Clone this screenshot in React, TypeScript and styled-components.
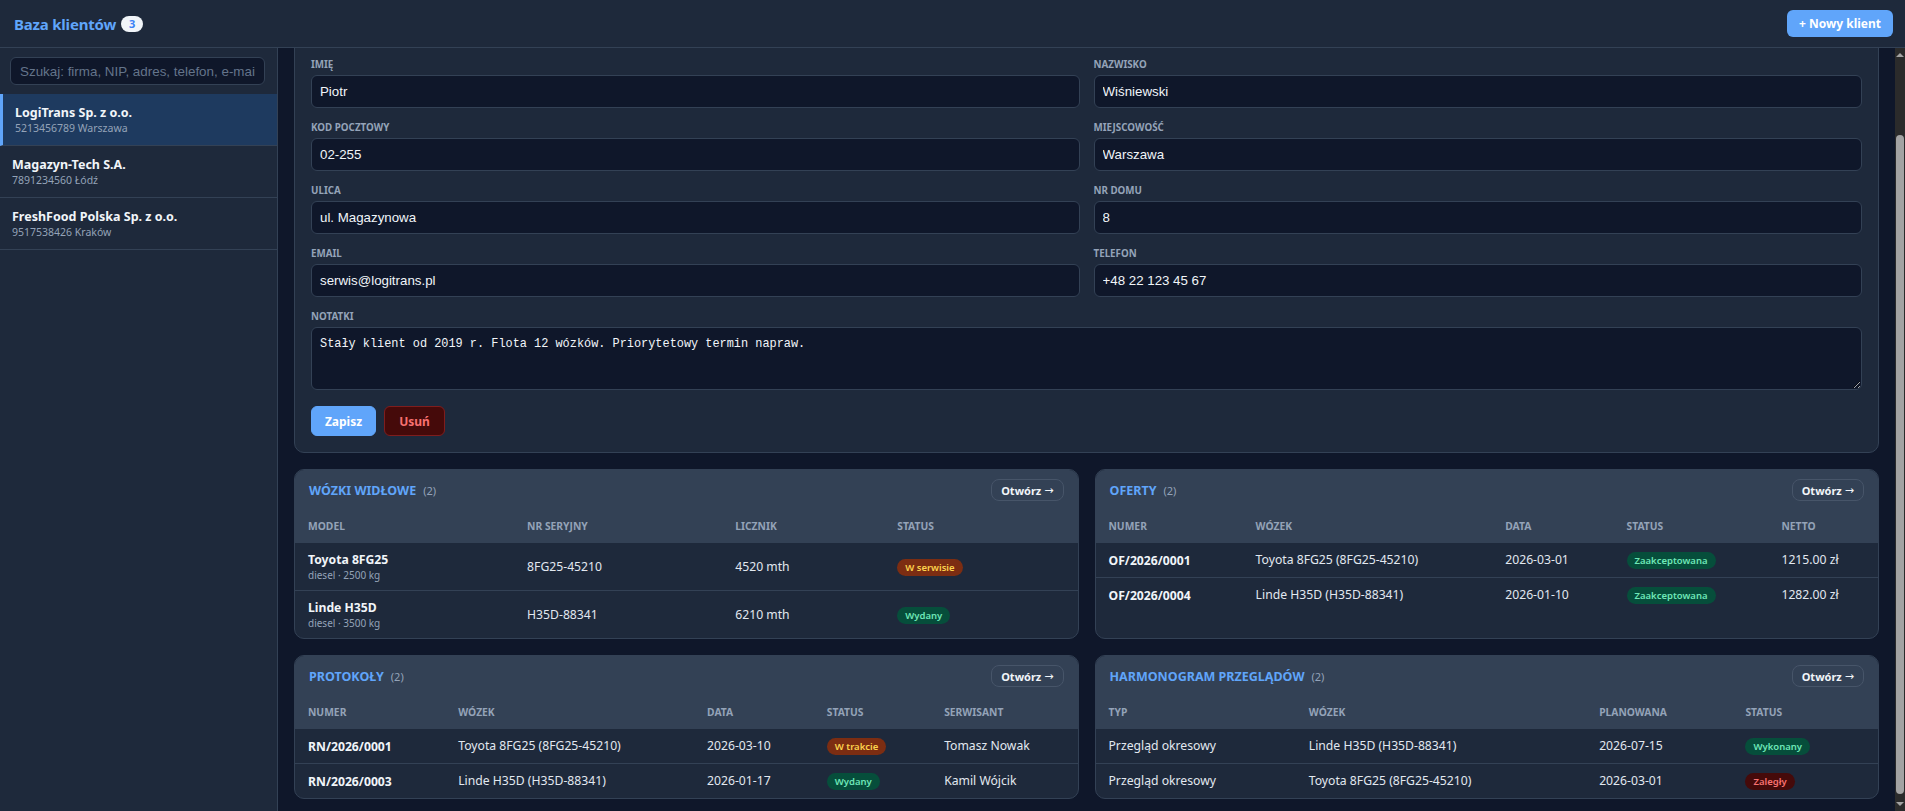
import { useLayoutEffect, useRef, useState } from "react";
import styled, { createGlobalStyle, css } from "styled-components";

const UI_FONT = `"Noto Sans", "Open Sans", sans-serif`;

const GlobalStyle = createGlobalStyle`
  html, body, #root {
    height: 100%;
  }
  body {
    margin: 0;
    background: #0f172a;
    color: #e2e8f0;
    font-family: ${UI_FONT};
    overflow: hidden;
  }
  * {
    box-sizing: border-box;
  }
`;

type Tone = "warn" | "ok" | "bad";

type Column = { label: string; width: number };

type Cell =
  | { kind: "text"; value: string }
  | { kind: "strong"; value: string }
  | { kind: "double"; value: string; sub: string }
  | { kind: "pill"; value: string; tone: Tone };

type PanelData = {
  title: string;
  count: number;
  columns: Column[];
  rows: Cell[][];
};

const clients = [
  { name: "LogiTrans Sp. z o.o.", nip: "5213456789", city: "Warszawa" },
  { name: "Magazyn-Tech S.A.", nip: "7891234560", city: "Łódź" },
  { name: "FreshFood Polska Sp. z o.o.", nip: "9517538426", city: "Kraków" },
];

const t = (value: string): Cell => ({ kind: "text", value });
const b = (value: string): Cell => ({ kind: "strong", value });
const p = (value: string, tone: Tone): Cell => ({ kind: "pill", value, tone });

const panels: PanelData[] = [
  {
    title: "Wózki widłowe",
    count: 2,
    columns: [
      { label: "Model", width: 28 },
      { label: "Nr seryjny", width: 26.6 },
      { label: "Licznik", width: 20.7 },
      { label: "Status", width: 24.7 },
    ],
    rows: [
      [
        { kind: "double", value: "Toyota 8FG25", sub: "diesel · 2500 kg" },
        t("8FG25-45210"),
        t("4520 mth"),
        p("W serwisie", "warn"),
      ],
      [
        { kind: "double", value: "Linde H35D", sub: "diesel · 3500 kg" },
        t("H35D-88341"),
        t("6210 mth"),
        p("Wydany", "ok"),
      ],
    ],
  },
  {
    title: "Oferty",
    count: 2,
    columns: [
      { label: "Numer", width: 18.8 },
      { label: "Wózek", width: 31.9 },
      { label: "Data", width: 15.5 },
      { label: "Status", width: 19.8 },
      { label: "Netto", width: 14 },
    ],
    rows: [
      [b("OF/2026/0001"), t("Toyota 8FG25 (8FG25-45210)"), t("2026-03-01"), p("Zaakceptowana", "ok"), t("1215.00 zł")],
      [b("OF/2026/0004"), t("Linde H35D (H35D-88341)"), t("2026-01-10"), p("Zaakceptowana", "ok"), t("1282.00 zł")],
    ],
  },
  {
    title: "Protokoły",
    count: 2,
    columns: [
      { label: "Numer", width: 19.2 },
      { label: "Wózek", width: 31.8 },
      { label: "Data", width: 15.3 },
      { label: "Status", width: 15 },
      { label: "Serwisant", width: 18.7 },
    ],
    rows: [
      [b("RN/2026/0001"), t("Toyota 8FG25 (8FG25-45210)"), t("2026-03-10"), p("W trakcie", "warn"), t("Tomasz Nowak")],
      [b("RN/2026/0003"), t("Linde H35D (H35D-88341)"), t("2026-01-17"), p("Wydany", "ok"), t("Kamil Wójcik")],
    ],
  },
  {
    title: "Harmonogram przeglądów",
    count: 2,
    columns: [
      { label: "Typ", width: 25.6 },
      { label: "Wózek", width: 37.1 },
      { label: "Planowana", width: 18.7 },
      { label: "Status", width: 18.6 },
    ],
    rows: [
      [t("Przegląd okresowy"), t("Linde H35D (H35D-88341)"), t("2026-07-15"), p("Wykonany", "ok")],
      [t("Przegląd okresowy"), t("Toyota 8FG25 (8FG25-45210)"), t("2026-03-01"), p("Zaległy", "bad")],
    ],
  },
];

const fields = [
  { label: "Imię", value: "Piotr" },
  { label: "Nazwisko", value: "Wiśniewski" },
  { label: "Kod pocztowy", value: "02-255" },
  { label: "Miejscowość", value: "Warszawa" },
  { label: "Ulica", value: "ul. Magazynowa" },
  { label: "Nr domu", value: "8" },
  { label: "Email", value: "serwis@logitrans.pl" },
  { label: "Telefon", value: "+48 22 123 45 67" },
];

const ARROW = 14;

const App = () => {
  const mainRef = useRef<HTMLDivElement>(null);
  const anchorRef = useRef<HTMLDivElement>(null);
  const [thumb, setThumb] = useState({ top: ARROW, height: 0 });

  // the reference shows the panel scrolled a bit, with the IMIĘ row near the top
  useLayoutEffect(() => {
    const main = mainRef.current;
    const anchor = anchorRef.current;
    if (!main || !anchor) return;
    main.scrollTop += anchor.getBoundingClientRect().top - 59;

    const track = main.clientHeight - ARROW * 2;
    setThumb({
      top: ARROW + (main.scrollTop / main.scrollHeight) * track,
      height: (main.clientHeight / main.scrollHeight) * track,
    });
  }, []);

  const renderCell = (cell: Cell) => {
    switch (cell.kind) {
      case "strong":
        return <Strong>{cell.value}</Strong>;
      case "double":
        return (
          <>
            <Strong>{cell.value}</Strong>
            <SubLine>{cell.sub}</SubLine>
          </>
        );
      case "pill":
        return <Pill $tone={cell.tone}>{cell.value}</Pill>;
      default:
        return cell.value;
    }
  };

  return (
    <>
      <GlobalStyle />
      <Shell>
        <TopBar>
          <Brand>
            Baza klientów <CountBadge>3</CountBadge>
          </Brand>
          <PrimaryButton>+ Nowy klient</PrimaryButton>
        </TopBar>

        <Body>
          <Sidebar>
            <SearchWrap>
              <SearchInput placeholder="Szukaj: firma, NIP, adres, telefon, e-mail" />
            </SearchWrap>
            {clients.map((c, i) => (
              <ClientItem key={c.nip} $active={i === 0}>
                <ClientName>{c.name}</ClientName>
                <ClientMeta>
                  {c.nip} {c.city}
                </ClientMeta>
              </ClientItem>
            ))}
          </Sidebar>

          <MainArea>
            <Main ref={mainRef}>
              <FormCard>
                <FieldGrid>
                  <Field>
                    <FieldLabel>Nazwa firmy</FieldLabel>
                    <TextInput defaultValue="LogiTrans Sp. z o.o." />
                  </Field>
                  <Field>
                    <FieldLabel>NIP</FieldLabel>
                    <TextInput defaultValue="5213456789" />
                  </Field>
                  {fields.map((f, i) => (
                    <Field key={f.label} ref={i === 0 ? anchorRef : undefined}>
                      <FieldLabel>{f.label}</FieldLabel>
                      <TextInput defaultValue={f.value} />
                    </Field>
                  ))}
                  <Field $wide>
                    <FieldLabel>Notatki</FieldLabel>
                    <NotesArea defaultValue="Stały klient od 2019 r. Flota 12 wózków. Priorytetowy termin napraw." />
                  </Field>
                </FieldGrid>
                <ActionRow>
                  <ActionButton $variant="save">Zapisz</ActionButton>
                  <ActionButton $variant="delete">Usuń</ActionButton>
                </ActionRow>
              </FormCard>

              <PanelGrid>
                {panels.map((panel) => (
                  <Panel key={panel.title}>
                    <PanelHead>
                      <PanelTitle>
                        {panel.title}
                        <PanelCount>({panel.count})</PanelCount>
                      </PanelTitle>
                      <OpenButton>
                        Otwórz <ArrowGlyph>→</ArrowGlyph>
                      </OpenButton>
                    </PanelHead>
                    <DataTable>
                      <colgroup>
                        {panel.columns.map((col) => (
                          <col key={col.label} style={{ width: `${col.width}%` }} />
                        ))}
                      </colgroup>
                      <thead>
                        <tr>
                          {panel.columns.map((col) => (
                            <Th key={col.label}>{col.label}</Th>
                          ))}
                        </tr>
                      </thead>
                      <tbody>
                        {panel.rows.map((row, ri) => (
                          <Tr key={ri}>
                            {row.map((cell, ci) => (
                              <Td key={ci}>{renderCell(cell)}</Td>
                            ))}
                          </Tr>
                        ))}
                      </tbody>
                    </DataTable>
                  </Panel>
                ))}
              </PanelGrid>
            </Main>

            <ScrollRail aria-hidden>
              <RailArrow $dir="up" />
              <RailThumb style={{ top: thumb.top, height: thumb.height }} />
              <RailArrow $dir="down" />
            </ScrollRail>
          </MainArea>
        </Body>
      </Shell>
    </>
  );
};

export default App;

const Shell = styled.div`
  height: 100vh;
  display: grid;
  grid-template-rows: 48px 1fr;
`;

const TopBar = styled.header`
  display: flex;
  align-items: center;
  justify-content: space-between;
  padding: 0 12px 0 14px;
  background: #1e293b;
  border-bottom: 1px solid #334155;
`;

const Brand = styled.h1`
  margin: 0;
  display: flex;
  align-items: center;
  gap: 5px;
  font-size: 15px;
  font-weight: 700;
  color: #60a5fa;
  letter-spacing: -0.2px;
`;

const CountBadge = styled.span`
  display: inline-flex;
  align-items: center;
  justify-content: center;
  min-width: 22px;
  height: 16px;
  padding: 0 6px;
  border-radius: 8px;
  background: #f1f5f9;
  color: #3b82f6;
  font-size: 11px;
  font-weight: 700;
`;

const PrimaryButton = styled.button`
  height: 27px;
  padding: 0 12px;
  border: none;
  border-radius: 6px;
  background: #60a5fa;
  color: #fff;
  font-family: ${UI_FONT};
  font-size: 12px;
  font-weight: 700;
`;

const Body = styled.div`
  display: grid;
  grid-template-columns: 278px 1fr;
  min-height: 0;
`;

const Sidebar = styled.aside`
  background: #1e293b;
  border-right: 1px solid #334155;
  display: flex;
  flex-direction: column;
`;

const SearchWrap = styled.div`
  padding: 9px 12px 9px 10px;
`;

const SearchInput = styled.input`
  width: 100%;
  height: 28px;
  padding: 0 9px;
  border: 1px solid #334155;
  border-radius: 6px;
  background: #0f172a;
  color: #e2e8f0;
  font-family: "Liberation Sans", Arial, sans-serif;
  font-size: 13.4px;

  &::placeholder {
    color: #64748b;
  }
`;

const ClientItem = styled.div<{ $active?: boolean }>`
  padding: 10px 12px;
  border-bottom: 1px solid #334155;
  ${({ $active }) =>
    $active &&
    css`
      background: #1e3a5f;
      border-left: 3px solid #60a5fa;
    `}
`;

const ClientName = styled.div`
  font-size: 12.5px;
  font-weight: 700;
  line-height: 17px;
  color: #f1f5f9;
`;

const ClientMeta = styled.div`
  font-size: 10.5px;
  line-height: 14px;
  color: #94a3b8;
`;

const MainArea = styled.div`
  display: grid;
  grid-template-columns: 1fr 10px;
  min-height: 0;
  background: #0f172a;
`;

const Main = styled.main`
  overflow-y: auto;
  scrollbar-width: none;
  padding: 16px;
  display: flex;
  flex-direction: column;
  gap: 16px;
`;

const ScrollRail = styled.div`
  position: relative;
  background: #2b2b2b;
`;

const RailArrow = styled.div<{ $dir: "up" | "down" }>`
  position: absolute;
  left: 1px;
  width: 0;
  height: 0;
  border-left: 4px solid transparent;
  border-right: 4px solid transparent;
  ${({ $dir }) =>
    $dir === "up"
      ? css`
          top: 5px;
          border-bottom: 4px solid #a3a3a3;
        `
      : css`
          bottom: 5px;
          border-top: 4px solid #a3a3a3;
        `}
`;

const RailThumb = styled.div`
  position: absolute;
  left: 1px;
  right: 1px;
  border-radius: 4px;
  background: #a3a3a3;
`;

const FormCard = styled.section`
  background: #1e293b;
  border: 1px solid #334155;
  border-radius: 10px;
  padding: 16px;
  flex-shrink: 0;
`;

const FieldGrid = styled.div`
  display: grid;
  grid-template-columns: 1fr 1fr;
  gap: 14px;
`;

const Field = styled.div<{ $wide?: boolean }>`
  display: flex;
  flex-direction: column;
  gap: 4px;
  ${({ $wide }) => $wide && "grid-column: 1 / -1;"}
`;

const FieldLabel = styled.label`
  font-size: 9.8px;
  line-height: 12px;
  font-weight: 700;
  text-transform: uppercase;
  color: #94a3b8;
`;

const TextInput = styled.input`
  height: 33px;
  padding: 0 8px;
  border: 1px solid #334155;
  border-radius: 6px;
  background: #0f172a;
  color: #f1f5f9;
  font-family: "Liberation Sans", Arial, sans-serif;
  font-size: 13.3px;
`;

const NotesArea = styled.textarea`
  height: 63px;
  padding: 8px;
  border: 1px solid #334155;
  border-radius: 6px;
  background: #0f172a;
  color: #f1f5f9;
  font-family: "Liberation Mono", "DejaVu Sans Mono", monospace;
  font-size: 11.9px;
  line-height: 16px;
`;

const ActionRow = styled.div`
  display: flex;
  gap: 8px;
  margin-top: 16px;
`;

const ActionButton = styled.button<{ $variant: "save" | "delete" }>`
  height: 30px;
  padding: 0 12px;
  border-radius: 6px;
  font-family: ${UI_FONT};
  font-size: 12px;
  font-weight: 700;
  ${({ $variant }) =>
    $variant === "save"
      ? css`
          min-width: 65px;
          border: 1px solid #60a5fa;
          background: #60a5fa;
          color: #fff;
        `
      : css`
          min-width: 61px;
          border: 1px solid #7f1d1d;
          background: #450a0a;
          color: #f87171;
        `}
`;

const PanelGrid = styled.div`
  display: grid;
  grid-template-columns: 1fr 1fr;
  gap: 16px;
  flex-shrink: 0;
`;

const Panel = styled.section`
  background: #1e293b;
  border: 1px solid #334155;
  border-radius: 10px;
  overflow: hidden;
`;

const PanelHead = styled.div`
  display: flex;
  align-items: center;
  justify-content: space-between;
  padding: 9px 14px 9px 14px;
  background: #334155;
`;

const PanelTitle = styled.h2`
  margin: 0;
  display: flex;
  align-items: baseline;
  font-size: 12.5px;
  font-weight: 700;
  text-transform: uppercase;
  color: #60a5fa;
`;

const PanelCount = styled.span`
  margin-left: 7px;
  font-size: 11px;
  font-weight: 400;
  color: #94a3b8;
`;

const OpenButton = styled.button`
  display: inline-flex;
  align-items: center;
  gap: 3px;
  height: 22px;
  padding: 0 9px;
  border: 1px solid #475569;
  border-radius: 8px;
  background: transparent;
  color: #f1f5f9;
  font-family: ${UI_FONT};
  font-size: 11px;
  font-weight: 700;
`;

const ArrowGlyph = styled.span`
  font-family: "DejaVu Sans", sans-serif;
  font-size: 11px;
  font-weight: 400;
`;

const DataTable = styled.table`
  width: 100%;
  border-collapse: collapse;
  table-layout: fixed;
`;

const Th = styled.th`
  padding: 10px 13px;
  background: #334155;
  text-align: left;
  font-size: 10.3px;
  line-height: 13px;
  font-weight: 700;
  text-transform: uppercase;
  color: #94a3b8;
`;

const Tr = styled.tr`
  & + & td {
    border-top: 1px solid #334155;
  }
`;

const Td = styled.td`
  padding: 8px 13px;
  font-size: 12.2px;
  line-height: 18px;
  color: #e2e8f0;
  white-space: nowrap;
  vertical-align: middle;
`;

const Strong = styled.div`
  font-weight: 700;
  line-height: 17px;
  color: #f1f5f9;
`;

const SubLine = styled.div`
  font-size: 10px;
  line-height: 14px;
  color: #94a3b8;
`;

const toneColors: Record<Tone, { bg: string; fg: string }> = {
  warn: { bg: "#7c2d12", fg: "#fcd34d" },
  ok: { bg: "#064e3b", fg: "#6ee7b7" },
  bad: { bg: "#450a0a", fg: "#f87171" },
};

const Pill = styled.span<{ $tone: Tone }>`
  display: inline-block;
  padding: 2px 8px;
  border-radius: 9px;
  font-size: 9.5px;
  line-height: 13px;
  font-weight: 600;
  background: ${({ $tone }) => toneColors[$tone].bg};
  color: ${({ $tone }) => toneColors[$tone].fg};
  vertical-align: middle;
`;
